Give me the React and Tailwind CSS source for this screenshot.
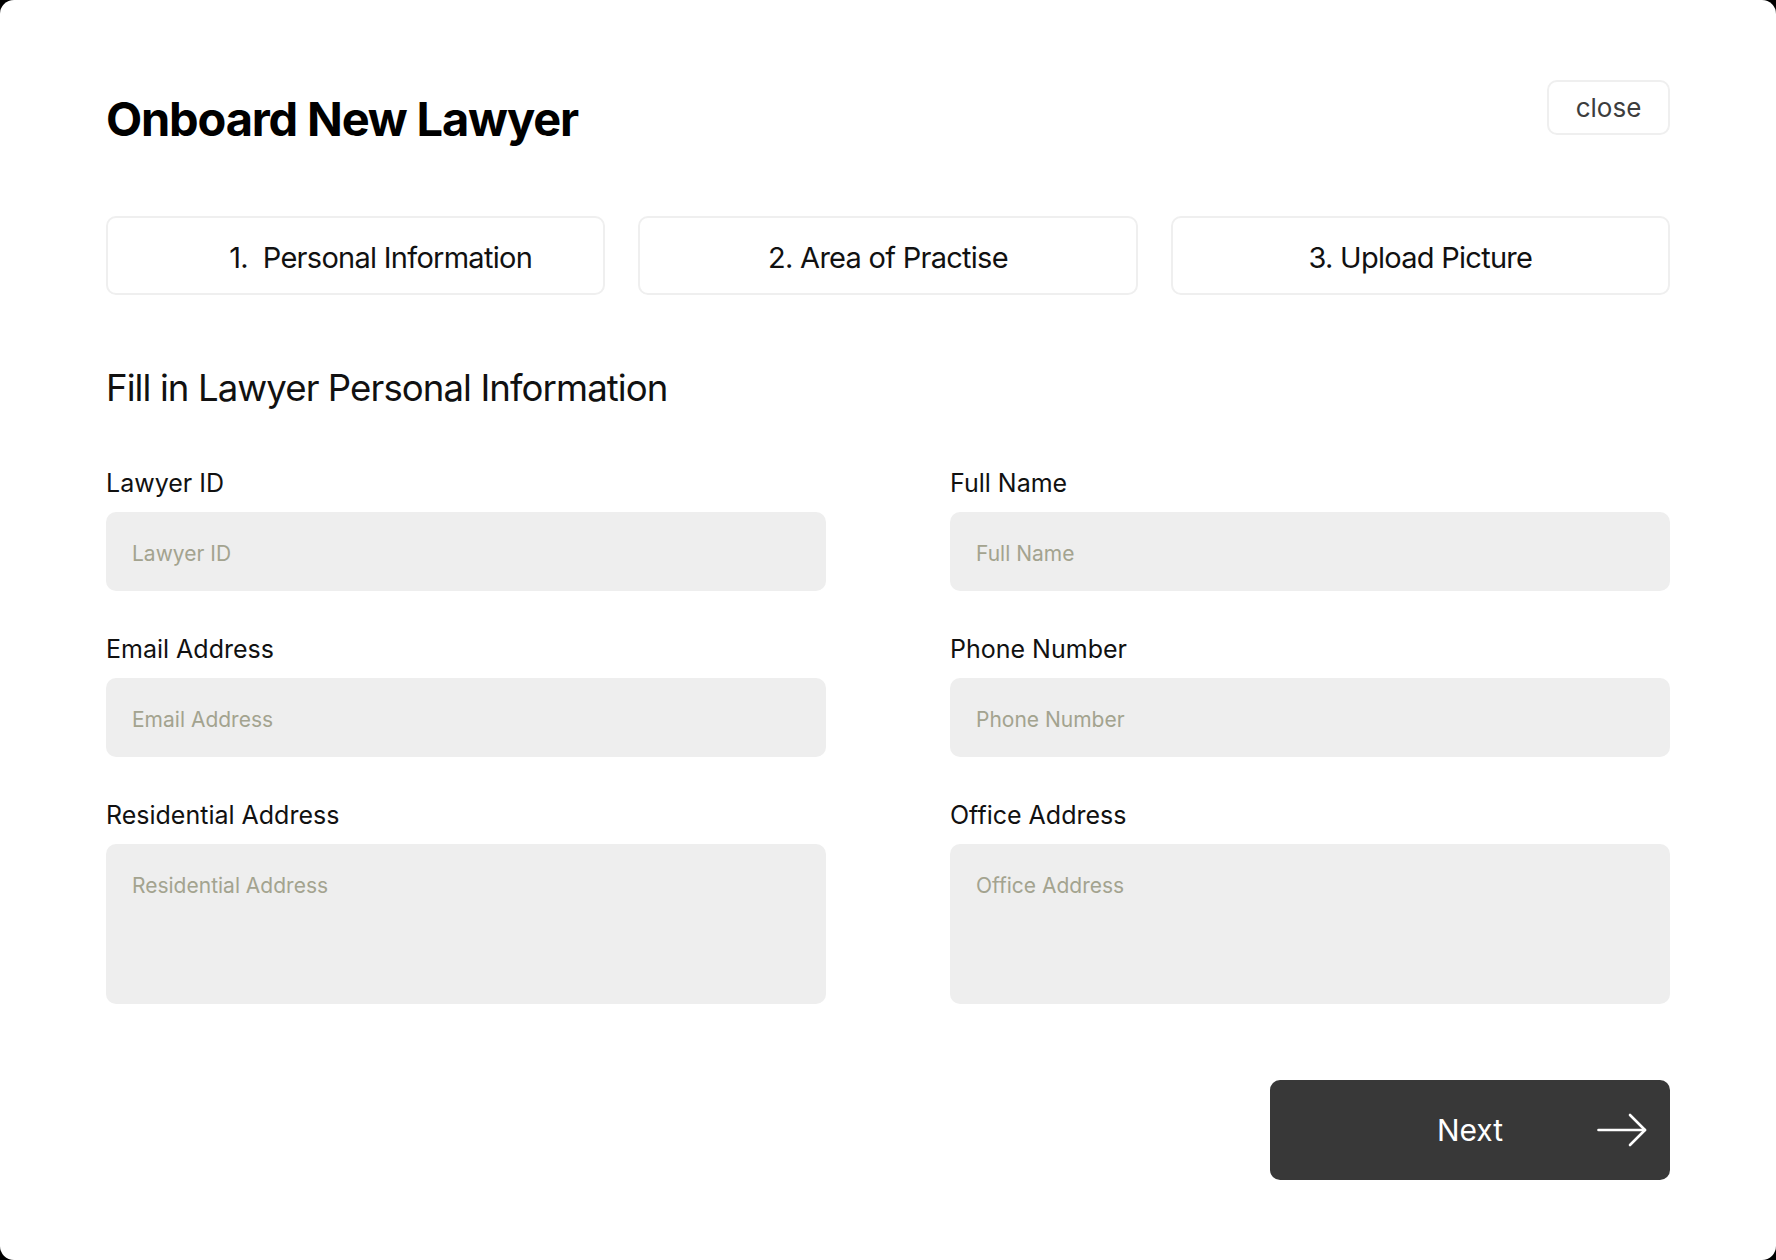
function Field({ label, placeholder, area }) {
  return (
    <div className="flex flex-col gap-[13px]">
      <label className="text-[25px] leading-[32px] text-[#111]">{label}</label>
      {area ? (
        <textarea
          className="h-[160px] w-full resize-none rounded-[10px] bg-[#eeeeee] px-[26px] pt-[28px] text-[21px] leading-[28px] outline-none placeholder:text-[#a3a38f]"
          placeholder={placeholder}
        />
      ) : (
        <input
          className="h-[79px] w-full rounded-[10px] bg-[#eeeeee] px-[26px] pt-[4px] text-[21px] outline-none placeholder:text-[#a3a38f]"
          type="text"
          placeholder={placeholder}
        />
      )}
    </div>
  )
}

function App() {
  const steps = [
    { text: "1.  Personal Information", pad: "pl-[50px]" },
    { text: "2. Area of Practise", pad: "" },
    { text: "3. Upload Picture", pad: "" },
  ]

  return (
    <div className="min-h-screen bg-black font-['Inter',sans-serif]">
      <div className="h-[1260px] rounded-[14px] bg-white px-[106px] pt-[80px]">
        <div className="flex items-start justify-between">
          <h1 className="mt-[16px] text-[47px] font-bold leading-[46px] tracking-tight text-black">
            Onboard New Lawyer
          </h1>
          <button className="h-[55px] w-[123px] rounded-[10px] border-2 border-[#efefef] text-[26px] text-[#3d3d3d]">
            close
          </button>
        </div>

        <div className="mt-[74px] grid grid-cols-3 gap-[33px]">
          {steps.map((s) => (
            <div
              key={s.text}
              className={`flex h-[79px] items-center justify-center whitespace-pre rounded-[10px] border-2 border-[#efefef] pt-[5px] text-[29px] tracking-tight text-[#111] ${s.pad}`}
            >
              {s.text}
            </div>
          ))}
        </div>

        <h2 className="mt-[75px] text-[36.6px] leading-[37px] tracking-tight text-[#111]">
          Fill in Lawyer Personal Information
        </h2>

        <div className="mt-[60px] grid grid-cols-2 gap-x-[124px] gap-y-[42px]">
          <Field label="Lawyer ID" placeholder="Lawyer ID" />
          <Field label="Full Name" placeholder="Full Name" />
          <Field label="Email Address" placeholder="Email Address" />
          <Field label="Phone Number" placeholder="Phone Number" />
          <Field label="Residential Address" placeholder="Residential Address" area />
          <Field label="Office Address" placeholder="Office Address" area />
        </div>

        <div className="mt-[76px] flex justify-end">
          <button className="grid h-[100px] w-[400px] grid-cols-3 items-center rounded-[10px] bg-[#383838] text-white">
            <span />
            <span className="text-center text-[30px]">Next</span>
            <span className="flex justify-end pr-[23px]">
              <svg width="50" height="34" viewBox="0 0 50 34" fill="none" stroke="white" strokeWidth="2.6" strokeLinecap="round" strokeLinejoin="round">
                <path d="M1.5 17H48" />
                <path d="M33 2L48 17L33 32" />
              </svg>
            </span>
          </button>
        </div>
      </div>
    </div>
  )
}

export default App
